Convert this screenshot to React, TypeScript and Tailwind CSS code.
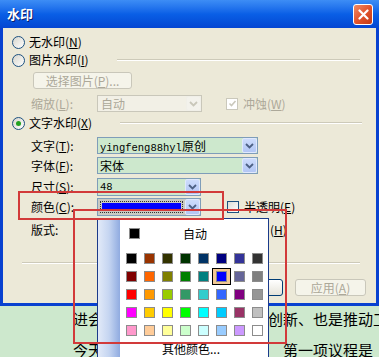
import React from "react";

const FONT = "[font-family:'Noto_Sans_CJK_SC','Noto_Sans',sans-serif]";
const MONO = "[font-family:'Liberation_Mono','DejaVu_Sans_Mono',monospace]";

function Radio({ checked }: { checked?: boolean }) {
  return (
    <span className="w-[13px] h-[13px] shrink-0 rounded-full border border-[#1c5180] bg-linear-to-br from-[#d6d5cc] to-white flex items-center justify-center">
      {checked && <span className="w-[5px] h-[5px] rounded-full bg-[#21a121]" />}
    </span>
  );
}

function Check({ disabled, checked }: { disabled?: boolean; checked?: boolean }) {
  return (
    <span
      className={
        "w-[12px] h-[12px] shrink-0 border flex items-center justify-center " +
        (disabled ? "border-[#cac8bb] bg-white" : "border-[#1c5180] bg-linear-to-br from-[#dcdcd7] to-white")
      }
    >
      {checked && (
        <svg width="9" height="9" viewBox="0 0 9 9">
          <path d="M1.5 4.5 L3.5 6.5 L7.5 2" stroke={disabled ? "#cac8bb" : "#21a121"} strokeWidth="1.6" fill="none" />
        </svg>
      )}
    </span>
  );
}

function Arrow({ disabled }: { disabled?: boolean }) {
  return (
    <span
      className={
        "w-[15px] shrink-0 flex items-center justify-center rounded-[2px] border " +
        (disabled
          ? "border-[#f0efe8] bg-[#f3f2ec]"
          : "border-[#e0e8fd] bg-linear-to-b from-[#cddcfc] to-[#b2c6f4]")
      }
    >
      <svg width="9" height="6" viewBox="0 0 9 6">
        <path d="M1 1 L4.5 4.5 L8 1" stroke={disabled ? "#c9c7ba" : "#4d6185"} strokeWidth="1.8" fill="none" />
      </svg>
    </span>
  );
}

function Label({ children, disabled }: { children: React.ReactNode; disabled?: boolean }) {
  return (
    <span className={"ml-[28px] w-[66px] shrink-0 whitespace-nowrap " + (disabled ? "text-[#aca899]" : "text-black")}>
      {children}
    </span>
  );
}

function Sep({ w, mr }: { w: string; mr: string }) {
  return <span className={"ml-auto h-[2px] border-t border-[#cdcab9] border-b border-b-white " + w + " " + mr} />;
}

const PALETTE = [
  ["#000000", "#993300", "#333300", "#003300", "#003366", "#000080", "#333399", "#333333"],
  ["#800000", "#FF6600", "#808000", "#008000", "#008080", "#0000FF", "#666699", "#808080"],
  ["#FF0000", "#FF9900", "#99CC00", "#339966", "#33CCCC", "#3366FF", "#800080", "#969696"],
  ["#FF00FF", "#FFCC00", "#FFFF00", "#00FF00", "#00FFFF", "#00CCFF", "#993366", "#C0C0C0"],
  ["#FF99CC", "#FFCC99", "#FFFF99", "#CCFFCC", "#CCFFFF", "#99CCFF", "#CC99FF", "#FFFFFF"],
];

export default function App() {
  return (
    <div className={"relative w-[379px] h-[357px] overflow-hidden bg-[#cde8cd] text-[12px] " + FONT}>
      {/* Dialog */}
      <div className="w-[379px] h-[306px] flex flex-col">
        {/* Title bar */}
        <div className="h-[28px] shrink-0 flex items-center justify-between pl-[7px] pr-[6px] bg-linear-to-b from-[#3d8df5] via-[#0a5fe6] to-[#0546d2]">
          <span className="text-white font-bold text-[13px] [text-shadow:1px_1px_#0a1e6e]">水印</span>
          <span className="w-[20px] h-[21px] rounded-[3px] border border-white bg-linear-to-br from-[#f08a64] via-[#e2542c] to-[#c23a17] flex items-center justify-center">
            <svg width="11" height="11" viewBox="0 0 11 11">
              <path d="M1.5 1.5 L9.5 9.5 M9.5 1.5 L1.5 9.5" stroke="white" strokeWidth="2.2" strokeLinecap="round" />
            </svg>
          </span>
        </div>
        {/* Body */}
        <div className="flex-1 flex flex-col bg-[#ECE9D8] border-l-[3px] border-r-[3px] border-b-[3px] border-[#0841d0] text-black">
          <div className="mt-[6px] h-[16px] flex items-center">
            <span className="ml-[9px]"><Radio /></span>
            <span className="ml-[4px]">无水印(<u>N</u>)</span>
          </div>
          <div className="mt-[2px] h-[16px] flex items-center">
            <span className="ml-[9px]"><Radio /></span>
            <span className="ml-[4px]">图片水印(<u>I</u>)</span>
            <Sep w="w-[243px]" mr="mr-[16px]" />
          </div>
          <div className="mt-[4px] h-[17px] flex items-center">
            <span className="ml-[30px] w-[99px] h-[17px] rounded-[3px] border border-[#c9c7ba] bg-[#f5f4ea] text-[#aca899] flex items-center justify-center">
              选择图片(<u>P</u>)...
            </span>
          </div>
          <div className="mt-[6px] h-[17px] flex items-center">
            <Label disabled>缩放(<u>L</u>):</Label>
            <span className="w-[105px] h-[17px] border border-[#c9c7ba] bg-[#f2f0e6] flex">
              <span className="flex-1 pl-[3px] text-[#aca899] leading-[15px]">自动</span>
              <Arrow disabled />
            </span>
            <span className="ml-[24px]"><Check disabled checked /></span>
            <span className="ml-[5px] text-[#aca899]">冲蚀(<u>W</u>)</span>
          </div>
          <div className="mt-[3px] h-[16px] flex items-center">
            <span className="ml-[9px]"><Radio checked /></span>
            <span className="ml-[4px]">文字水印(<u>X</u>)</span>
            <Sep w="w-[242px]" mr="mr-[14px]" />
          </div>
          <div className="mt-[6px] h-[17px] flex items-center">
            <Label>文字(<u>T</u>):</Label>
            <span className="w-[161px] h-[17px] border border-[#7f9db9] bg-[#cde8cd] flex">
              <span className="flex-1 pl-[2px] leading-[15px] whitespace-nowrap">
                <span className={MONO + " text-[10.5px]"}>yingfeng88hyl</span>原创
              </span>
              <Arrow />
            </span>
          </div>
          <div className="mt-[3px] h-[17px] flex items-center">
            <Label>字体(<u>F</u>):</Label>
            <span className="w-[161px] h-[17px] border border-[#7f9db9] bg-[#cde8cd] flex">
              <span className="flex-1 pl-[2px] leading-[15px]">宋体</span>
              <Arrow />
            </span>
          </div>
          <div className="mt-[4px] h-[18px] flex items-center">
            <Label>尺寸(<u>S</u>):</Label>
            <span className="w-[104px] h-[18px] border border-[#7f9db9] bg-[#cde8cd] flex">
              <span className={"flex-1 pl-[2px] leading-[16px] text-[10.5px] " + MONO}>48</span>
              <Arrow />
            </span>
          </div>
          <div className="mt-[2px] h-[18px] flex items-center">
            <Label>颜色(<u>C</u>):</Label>
            <span className="w-[104px] h-[18px] border border-[#7f9db9] bg-[#c9c9c2] flex">
              <span className="flex-1 p-[2px] flex">
                <span className="flex-1 border border-dotted border-[#333] p-[1px] flex">
                  <span className="flex-1 bg-[#0000ff]" />
                </span>
              </span>
              <Arrow />
            </span>
            <span className="ml-[26px]"><Check /></span>
            <span className="ml-[5px]">半透明(<u>E</u>)</span>
          </div>
          <div className="mt-[6px] h-[16px] flex items-center">
            <Label>版式:</Label>
            <span className="ml-[173px]">(<u>H</u>)</span>
          </div>
          <div className="mt-[24px] ml-[19px] w-[338px] h-[2px] border-t border-[#cdcab9] border-b border-b-white" />
          <div className="mt-[15px] h-[17px] flex justify-end items-center pr-[10px] gap-[12px]">
            <span className="w-[78px] h-[17px] rounded-[3px] border border-[#003c74] bg-linear-to-b from-white to-[#e6e4da] flex items-center justify-center">
              取消
            </span>
            <span className="w-[71px] h-[17px] rounded-[3px] border border-[#c9c7ba] bg-[#f5f4ea] text-[#aca899] flex items-center justify-center">
              应用(<u>A</u>)
            </span>
          </div>
        </div>
      </div>

      {/* Document text behind */}
      <div className="pl-[73px] text-[15px] text-black whitespace-nowrap leading-[26px]">
        <div className="h-[26px] flex">
          <span>进会</span>
          <span className="ml-[165px]">创新、也是推动工作</span>
        </div>
        <div className="mt-[5px] h-[26px] flex">
          <span>今天</span>
          <span className="ml-[180px]">第一项议程是</span>
        </div>
      </div>

      {/* Colour palette popup */}
      <div className="absolute left-[97px] top-[218px] w-[172px] h-[150px] border border-[#1b3a8a] bg-white flex">
        <div className="w-[22px] shrink-0 bg-linear-to-r from-[#e2eaf8] via-[#c5d5f1] to-[#90abe0]" />
        <div className="flex-1 flex flex-col pt-[9px]">
          <div className="h-[11px] flex items-center">
            <span className="ml-[9px] w-[11px] h-[11px] bg-black border border-[#8c8c8c]" />
            <span className="ml-[43px] leading-[16px]">自动</span>
          </div>
          <div className="mt-[14px] ml-[6px] grid grid-cols-[repeat(8,11px)] gap-[7px]">
            {PALETTE.map((row, r) =>
              row.map((c, i) => {
                const sel = r === 1 && i === 5;
                return (
                  <span key={r + "-" + i} className="relative w-[11px] h-[11px]">
                    {sel && (
                      <span className="absolute -left-[4px] -top-[3px] w-[19px] h-[17px] border border-black bg-[#f2c995]" />
                    )}
                    <span
                      className="absolute inset-0 border border-[#8c8c8c]"
                      style={{ backgroundColor: c }}
                    />
                  </span>
                );
              })
            )}
          </div>
          <div className="mt-[5px] ml-[42px] leading-[16px]">其他颜色...</div>
        </div>
      </div>

      {/* Red annotation rectangles */}
      <div className="absolute left-[18px] top-[191px] w-[206px] h-[29px] border-2 border-[#d23a3a]" />
      <div className="absolute left-[73px] top-[209px] w-[214px] h-[135px] border-2 border-[#d23a3a]" />
    </div>
  );
}
